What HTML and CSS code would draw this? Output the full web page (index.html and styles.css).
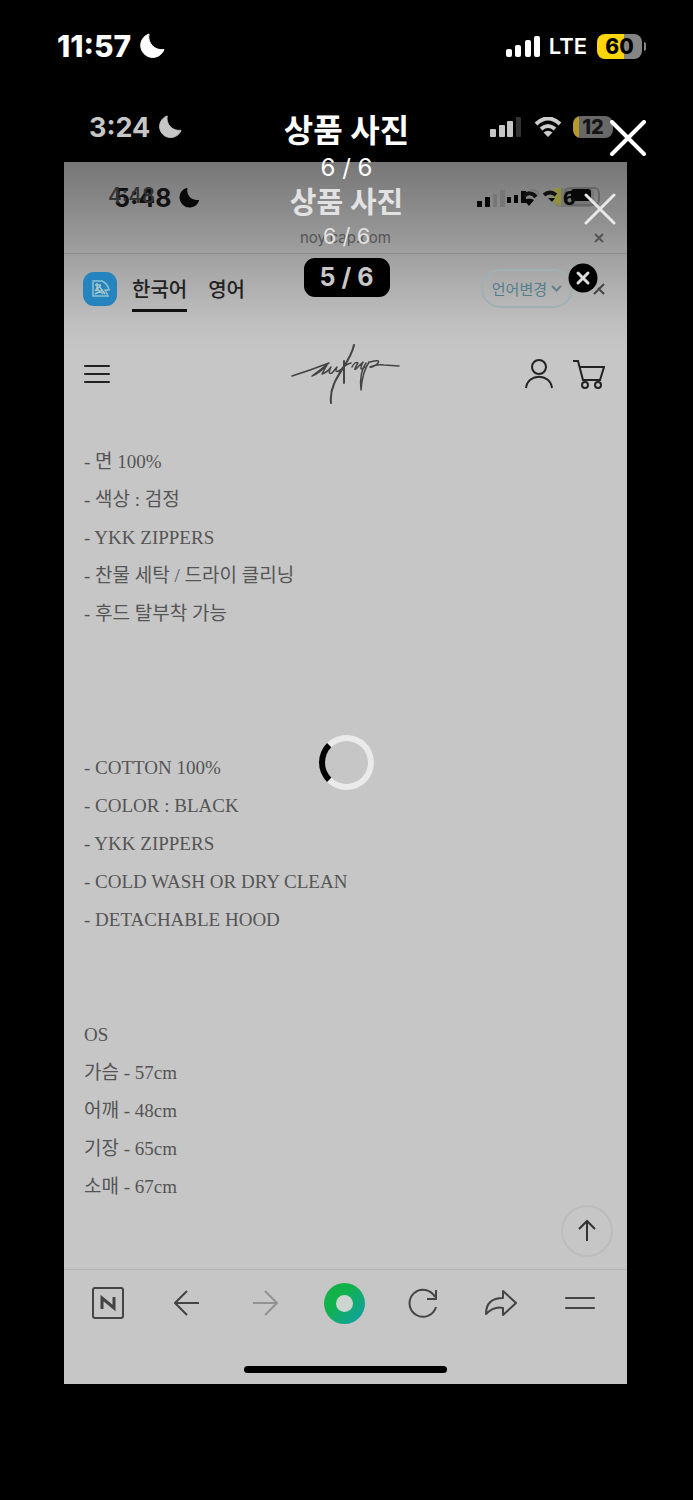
FILE: index.html
```html
<!DOCTYPE html>
<html lang="ko">
<head>
    <meta charset="UTF-8">
    <meta name="viewport" content="width=device-width, initial-scale=1.0">
    <title>상품 사진</title>
    <link rel="stylesheet" href="styles.css">
</head>
<body>
<div class="viewer">
    <div class="status">
        <span class="clock">11:57</span>
        <svg class="moon" width="26" height="26" viewBox="0 0 26 26"><path d="M10 1A12 12 0 1 0 25 16.500A13 13 0 0 1 10 1Z" stroke="#fff" stroke-width="1" stroke-linejoin="round"/></svg>
        <svg class="signal" width="35" height="23" viewBox="0 0 35 23"><rect x="0" y="14" width="6" height="8" rx="2"/><rect x="9" y="10" width="6" height="12" rx="2"/><rect x="19" y="5" width="6" height="17" rx="2"/><rect x="28" y="1" width="6" height="21" rx="2"/></svg>
        <span class="network">LTE</span>
        <span class="battery">60</span>
    </div>

    <div class="status status-mid">
        <span class="clock">3:24</span>
        <svg class="moon" width="24" height="24" viewBox="0 0 26 26"><path d="M10 1A12 12 0 1 0 25 16.500A13 13 0 0 1 10 1Z" stroke="#c6c6c6" stroke-width="1" stroke-linejoin="round"/></svg>
        <svg class="signal" width="32" height="20" viewBox="0 0 32 20"><rect x="0" y="12" width="6" height="8" rx="1"/><rect x="9" y="8" width="6" height="12" rx="1"/><rect x="17" y="4" width="6" height="16" rx="1"/><rect x="26" y="0" width="5" height="20" rx="1" fill="#333"/></svg>
        <svg class="wifi" width="28" height="20" viewBox="0 0 28 20"><path d="M2 7Q14 -4 26 7M7 12Q14 6 21 12" fill="none" stroke="#ccc" stroke-width="4"/><path d="M9.500 15.500Q14 12 18.500 15.500L14 20Z" fill="#ccc"/></svg>
        <span class="battery battery-low">12</span>
    </div>

    <main class="photo">
        <div class="browser-top">
            <div class="inner-status">
                <span class="inner-clock">5:48<span class="inner-clock-old">4:48</span></span>
                <svg width="20" height="20" viewBox="0 0 26 26"><path d="M10 1A12 12 0 1 0 25 16.500A13 13 0 0 1 10 1Z" stroke="#080808" stroke-width="2" stroke-linejoin="round"/></svg>
                <svg class="inner-icons" width="130" height="24" viewBox="0 0 130 24">
                    <rect x="77" y="2" width="40" height="19" rx="6" fill="#777"/>
                    <path d="M78 2h6v18q-8-1-9-9 0-7 3-9Z" fill="#91903f"/>
                    <rect x="88" y="2" width="34" height="17" rx="5" fill="none" stroke="#666" stroke-width="2"/>
                    <path d="M0 15h5v6H0ZM8 11h5v10H8ZM30 11h4v6h-4ZM37 9h4v8h-4ZM44 5h5v12h-5Z"/>
                    <path d="M16 8h4v13h-4ZM23 4h5v17h-5Z" fill="#777"/>
                    <path d="M47 10Q53 4 59 11M67 9Q73 4 79 9" fill="none" stroke="#111" stroke-width="4"/>
                    <path d="M53 5Q60 2 62 9" fill="none" stroke="#777" stroke-width="2"/>
                    <path d="M47 14Q53 11 57 14L52 20ZM71 12L75 16L78 12Z"/>
                    <rect x="94" y="3" width="20" height="12" rx="3"/>
                    <text x="86" y="19" class="inner-percent">6</text>
                </svg>
            </div>
            <div class="address">
                <span>noy.cap.com</span>
                <button class="icon-button address-close" aria-label="페이지 닫기"><svg width="10" height="10" viewBox="0 0 10 10"><path d="M1 1L9 9M9 1L1 9" fill="none" stroke="#555" stroke-width="2"/></svg></button>
            </div>
        </div>

        <div class="languages">
            <svg class="translate" width="34" height="34" viewBox="0 0 34 34"><rect width="34" height="34" rx="11" fill="#2583be"/><path d="M10 9h9q6 3 7 9h-4l3 6H10Z" fill="none" stroke="#90c1cf" stroke-width="1.500"/><path d="M12 13h6M14 11v8M12 19l6-6M12 22l8-4M16 14l6 8M13 16l7 6" fill="none" stroke="#a5c8cb" stroke-width="1.500"/></svg>
            <a class="tab active" href="#ko">한국어</a>
            <a class="tab" href="#en">영어</a>
            <button class="change">언어변경
                <svg width="11" height="7" viewBox="0 0 11 7"><path d="M1 1L5.500 5.500L10 1" fill="none" stroke="#65808a" stroke-width="2"/></svg>
            </button>
            <svg class="languages-close" width="12" height="12" viewBox="0 0 12 12"><path d="M1 11L11 1M5 5L11 11" fill="none" stroke="#444" stroke-width="2"/></svg>
            <button class="icon-button round-close" aria-label="닫기"><svg width="30" height="30" viewBox="0 0 30 30"><circle cx="15" cy="15" r="14.500"/><path d="M10 10L20 20M20 10L10 20" stroke="#ddd" stroke-width="3" stroke-linecap="round"/></svg></button>
        </div>

        <header class="shop-header">
            <button class="icon-button" aria-label="메뉴"><svg width="28" height="20" viewBox="0 0 28 20"><path d="M2 2H26M2 10H26M2 18H26" fill="none" stroke="#222" stroke-width="2" stroke-linecap="round"/></svg></button>
            <svg class="logo" width="110" height="60" viewBox="0 0 110 60" fill="none" stroke="#444" stroke-linecap="round" stroke-linejoin="round">
                <path d="M1 32Q20 26 38 19L21 32Q29 29 36 21L31 30Q37 28 40 23Q36 31 41 29L46 23Q43 30 49 26" stroke-width="1.500"/>
                <path d="M63 1C60 16 47 29 43 40Q39 49 40 59M53 17V39" stroke-width="2"/>
                <path d="M48 28Q54 20 60 19M61 23Q64 17 67 19Q62 27 65 25L72 18Q67 29 74 23" stroke-width="1.500"/>
                <path d="M75 19Q68 29 70 46Q71 29 78 18M79 18Q90 15 87 19Q82 24 79 23Q86 20 93 21L108 22" stroke-width="1.500"/>
            </svg>
            <div class="shop-actions">
                <button class="icon-button" aria-label="내 계정"><svg width="28" height="30" viewBox="0 0 28 30" fill="none" stroke="#222" stroke-width="2"><circle cx="14" cy="8" r="7"/><path d="M1 29C3 14 25 14 27 29"/></svg></button>
                <button class="icon-button" aria-label="장바구니"><svg width="32" height="30" viewBox="0 0 32 30" fill="none" stroke="#222" stroke-width="2"><path d="M0 2H5L10 21H27L31 8H7"/><circle cx="12" cy="26" r="3"/><circle cx="25" cy="26" r="3"/></svg></button>
            </div>
        </header>

        <section class="details">
            <ul>
                <li>- 면 100%</li>
                <li>- 색상 : 검정</li>
                <li>- YKK ZIPPERS</li>
                <li>- 찬물 세탁 / 드라이 클리닝</li>
                <li>- 후드 탈부착 가능</li>
            </ul>
            <ul class="english">
                <li>- COTTON 100%</li>
                <li>- COLOR : BLACK</li>
                <li>- YKK ZIPPERS</li>
                <li>- COLD WASH OR DRY CLEAN</li>
                <li>- DETACHABLE HOOD</li>
            </ul>
            <ul class="sizes">
                <li>OS</li>
                <li>가슴 - 57cm</li>
                <li>어깨 - 48cm</li>
                <li>기장 - 65cm</li>
                <li>소매 - 67cm</li>
            </ul>
            <button class="to-top" aria-label="맨 위로"><svg width="20" height="24" viewBox="0 0 20 24"><path d="M10 22V2M2 10L10 2L18 10" fill="none" stroke="#333" stroke-width="2"/></svg></button>
        </section>

        <nav class="toolbar">
            <button class="icon-button" aria-label="네이버 홈"><svg width="32" height="32" viewBox="0 0 32 32" fill="none" stroke="#444" stroke-width="2"><rect x="1" y="1" width="30" height="30" rx="2"/><path d="M10 22V11L22 21V10" stroke-width="3"/></svg></button>
            <button class="icon-button" aria-label="뒤로"><svg width="26" height="26" viewBox="0 0 26 26"><path d="M25 13H1M13 1L1 13L13 25" fill="none" stroke="#444" stroke-width="2"/></svg></button>
            <button class="icon-button" aria-label="앞으로"><svg width="26" height="26" viewBox="0 0 26 26"><path d="M1 13H25M13 1L25 13L13 25" fill="none" stroke="#929292" stroke-width="2"/></svg></button>
            <button class="icon-button" aria-label="그린닷"><span class="green-dot"></span></button>
            <button class="icon-button" aria-label="새로고침"><svg width="30" height="30" viewBox="0 0 30 30"><path d="M28 19A13.500 13.500 0 1 1 27 9M28 2V11H19" fill="none" stroke="#444" stroke-width="2"/></svg></button>
            <button class="icon-button" aria-label="공유"><svg width="32" height="28" viewBox="0 0 32 28"><path d="M18 2L31 14L18 26V19Q9 17 1 25Q1 9 18 9Z" fill="none" stroke="#444" stroke-width="2" stroke-linejoin="round"/></svg></button>
            <button class="icon-button" aria-label="더보기"><svg width="30" height="14" viewBox="0 0 30 14"><path d="M1 2H29M1 12H29" fill="none" stroke="#444" stroke-width="2" stroke-linecap="round"/></svg></button>
        </nav>
        <div class="home-bar"></div>
    </main>

    <div class="caption">
        <h1>상품 사진</h1>
        <p>6 / 6</p>
    </div>
    <div class="caption caption-old">
        <h2>상품 사진</h2>
        <p>6 / 6</p>
        <span class="counter">5 / 6</span>
    </div>
    <button class="icon-button close" aria-label="사진 닫기"><svg width="36" height="36" viewBox="0 0 36 36"><path d="M2 2L34 34M34 2L2 34" stroke="#fff" stroke-width="4" stroke-linecap="round"/></svg></button>
    <button class="icon-button close close-old" aria-label="이전 사진 닫기"><svg width="32" height="32" viewBox="0 0 32 32"><path d="M2 2L30 30M30 2L2 30" stroke="#e8e8e8" stroke-width="3" stroke-linecap="round"/></svg></button>
    <div class="spinner"></div>
</div>
</body>
</html>
```
FILE: styles.css
```css
body {
    margin: 0;
    background: #000;
    font-family: Inter, "Noto Sans CJK KR", sans-serif;
}
* {
    box-sizing: border-box;
}
svg {
    display: block;
    flex-shrink: 0;
}
h1, h2, p, ul {
    margin: 0;
    padding: 0;
}
ul {
    list-style: none;
}
.viewer {
    position: relative;
    padding-bottom: 116px;
}
.icon-button {
    display: flex;
    align-items: center;
    justify-content: center;
    padding: 0;
    border: none;
    background: none;
    cursor: pointer;
}

/* status bars */
.status {
    display: flex;
    align-items: center;
    height: 92px;
    padding: 0 51px 0 57px;
    color: #fff;
    fill: #fff;
}
.clock {
    font-size: 30px;
    font-weight: 800;
}
.moon {
    margin-left: 8px;
}
.signal {
    margin-left: auto;
}
.network {
    margin: 0 10px 0 8px;
    font-size: 22px;
    font-weight: 600;
}
.battery {
    position: relative;
    width: 45px;
    height: 25px;
    border-radius: 8px;
    background: linear-gradient(90deg, #ffd60a 60%, #858585 60%);
    color: #000;
    font-size: 21px;
    font-weight: 800;
    line-height: 25px;
    text-align: center;
}
.battery::after {
    content: "";
    position: absolute;
    top: 8px;
    right: -4px;
    width: 2px;
    height: 9px;
    border-radius: 0 2px 2px 0;
    background: #858585;
}
.status-mid {
    height: 70px;
    padding: 0 80px 0 89px;
    color: #c6c6c6;
    fill: #c6c6c6;
}
.status-mid .clock {
    font-size: 27px;
    font-weight: 700;
}
.wifi {
    margin: 0 11px 0 12px;
}
.battery-low {
    width: 40px;
    height: 22px;
    background: linear-gradient(90deg, #b89a2c 15%, #686868 15%);
    color: #151515;
    font-size: 20px;
    line-height: 22px;
}
.battery-low::after {
    display: none;
}

/* photographed page */
.photo {
    margin: 0 66px 0 64px;
    background: linear-gradient(#777 0, #939393 66px, #a0a0a0 92px, #bfbfbf 160px, #c6c6c6 190px);
}
.browser-top {
    height: 92px;
    border-bottom: 1px solid #8b8b8b;
}
.inner-status {
    display: flex;
    align-items: center;
    gap: 7px;
    height: 66px;
    padding: 6px 20px 0 50px;
    fill: #080808;
}
.inner-clock {
    position: relative;
    color: #111;
    font-size: 25px;
    font-weight: 700;
}
.inner-clock-old {
    position: absolute;
    top: 0;
    left: -6px;
    color: #333;
    font-size: 21px;
    font-weight: 500;
}
.inner-icons {
    margin-left: auto;
}
.inner-percent {
    font-size: 19px;
    font-weight: 800;
}
.address {
    position: relative;
    color: #555;
    font-size: 15px;
    line-height: 20px;
    text-align: center;
}
.address-close {
    position: absolute;
    top: 5px;
    right: 23px;
}
.languages {
    position: relative;
    display: flex;
    align-items: center;
    height: 69px;
    padding: 0 22px 0 19px;
}
.translate {
    margin-right: 15px;
}
.tab {
    display: flex;
    align-items: center;
    height: 46px;
    margin-right: 21px;
    border-top: 3px solid transparent;
    border-bottom: 3px solid transparent;
    color: #222;
    font-size: 20px;
    font-weight: 500;
    text-decoration: none;
}
.active {
    border-bottom-color: #111;
}
.change {
    display: flex;
    align-items: center;
    gap: 4px;
    height: 39px;
    margin-left: auto;
    padding: 0 9px;
    border: 2px solid #a1b0b3;
    border-radius: 20px;
    background: none;
    color: #527e8d;
    font-family: inherit;
    font-size: 15px;
}
.languages-close {
    margin-left: 20px;
}
.round-close {
    position: absolute;
    top: 9px;
    right: 29px;
}
.shop-header {
    position: relative;
    display: flex;
    align-items: center;
    justify-content: space-between;
    height: 102px;
    padding: 0 22px 0 19px;
}
.logo {
    position: absolute;
    left: 50%;
    transform: translateX(-50%);
}
.shop-actions {
    display: flex;
    gap: 20px;
}
.details {
    position: relative;
    padding: 18px 20px 63px;
    color: #555;
    font-family: "Liberation Serif", "Noto Sans CJK KR", serif;
    font-size: 19px;
    line-height: 38px;
}
.details li {
    height: 38px;
}
.english {
    margin-top: 116px;
}
.sizes {
    margin-top: 77px;
}
.to-top {
    position: absolute;
    right: 14px;
    bottom: 12px;
    display: flex;
    align-items: center;
    justify-content: center;
    width: 52px;
    height: 52px;
    padding: 0;
    border: 2px solid #bcbcbc;
    border-radius: 50%;
    background: none;
}
.toolbar {
    display: flex;
    height: 70px;
    padding: 0 8px 3px 5px;
    border-top: 1px solid #b6b6b6;
}
.toolbar .icon-button {
    flex: 1;
}
.green-dot {
    width: 41px;
    height: 41px;
    border: 12px solid transparent;
    border-radius: 50%;
    background: linear-gradient(#cdd5d1, #cdd5d1) padding-box, linear-gradient(135deg, #12b24a 35%, #11a398 85%) border-box;
}
.home-bar {
    height: 45px;
    padding: 27px 0 11px;
}
.home-bar::before {
    content: "";
    display: block;
    width: 36%;
    height: 7px;
    margin: 0 auto;
    border-radius: 4px;
    background: #000;
}

/* overlays */
.caption {
    position: absolute;
    top: 110px;
    left: 0;
    right: 0;
    display: flex;
    flex-direction: column;
    align-items: center;
    color: #fff;
}
.caption h1 {
    font-size: 32px;
    font-weight: 700;
    line-height: 42px;
}
.caption p {
    font-size: 24px;
    line-height: 32px;
}
.caption-old {
    top: 185px;
    color: #e2e2e2;
}
.caption-old h2 {
    font-size: 29px;
    font-weight: 700;
    line-height: 36px;
}
.caption-old p {
    font-size: 22px;
    line-height: 30px;
}
.counter {
    width: 86px;
    height: 39px;
    margin-top: 7px;
    border-radius: 11px;
    background: #000;
    color: #c8c8c8;
    font-size: 25px;
    font-weight: 700;
    line-height: 39px;
    text-align: center;
}
.close {
    position: absolute;
    top: 120px;
    right: 47px;
}
.close-old {
    top: 193px;
    right: 77px;
}
.spinner {
    position: absolute;
    top: 735px;
    left: 50%;
    width: 55px;
    height: 55px;
    margin-left: -28px;
    border: 6px solid #eaeaea;
    border-left-color: #000;
    border-radius: 50%;
}
```
